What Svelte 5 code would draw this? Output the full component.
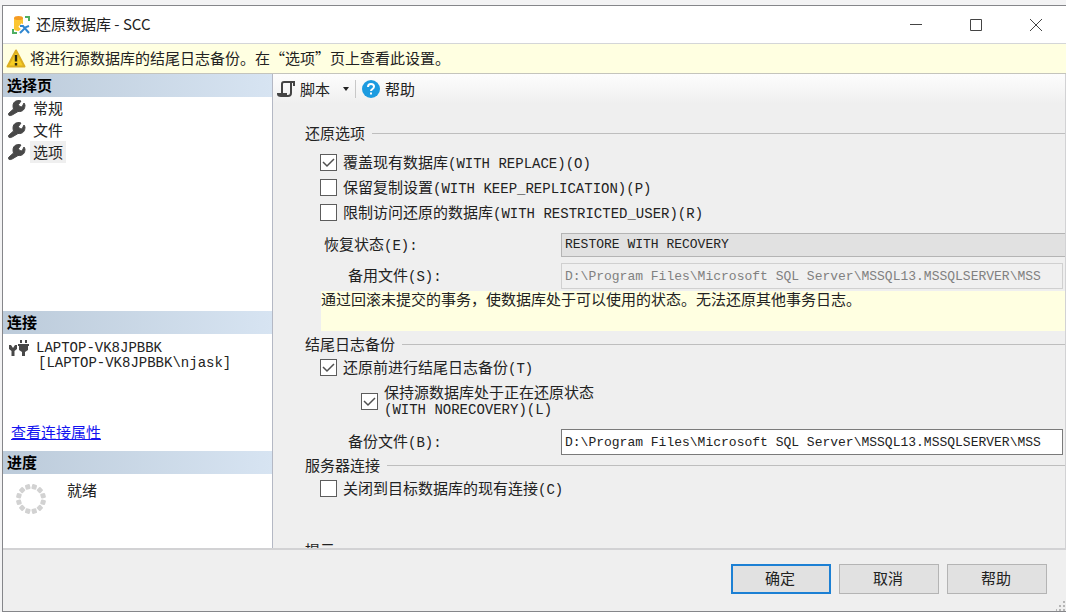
<script>
  const path = 'D:\\Program Files\\Microsoft SQL Server\\MSSQL13.MSSQLSERVER\\MSS';
  const pages = ['常规', '文件', '选项'];
  const restoreOptions = [
    { id: 'replace', zh: '覆盖现有数据库', en: '(WITH REPLACE)(O)', checked: true },
    { id: 'keep', zh: '保留复制设置', en: '(WITH KEEP_REPLICATION)(P)', checked: false },
    { id: 'restrict', zh: '限制访问还原的数据库', en: '(WITH RESTRICTED_USER)(R)', checked: false }
  ];
  const ticks = Array.from({ length: 12 }, (_, i) => i * 30 + 15);
  let selected = $state('选项');
</script>

<div class="desktop">
  <div class="dialog">
    <header class="titlebar">
      <svg class="app-icon" width="20" height="20" viewBox="0 0 20 20">
        <path d="M3 3v11c0 2.500 9 2.500 9 0V3z" fill="#fcc632" />
        <ellipse cx="7.500" cy="3" rx="4.500" ry="2" fill="#f59b23" />
        <path d="M14 2h4v4M2 14v4h4" fill="none" stroke="#4fae62" stroke-width="2" />
        <path d="M9 10l9 8M18 10l-9 8" stroke="#fff" stroke-width="5" />
        <path d="M9 11l3 0 6 7M18 11l-3 1-6 6" fill="none" stroke="#2f86d0" stroke-width="2" />
      </svg>
      <h1>还原数据库 - SCC</h1>
      <div class="caption">
        <button aria-label="最小化"><svg width="14" height="14"><path d="M1 6.500h12" /></svg></button>
        <button aria-label="最大化"><svg width="14" height="14"><path d="M1.500 1.500h11v11h-11z" /></svg></button>
        <button aria-label="关闭"><svg width="14" height="14"><path d="M1 1l12 12M13 1L1 13" /></svg></button>
      </div>
    </header>

    <div class="banner">
      <svg width="20" height="20" viewBox="0 0 20 20">
        <path d="M10 1.500L18.500 17.500h-17z" fill="#f6cd22" stroke="#dcae20" stroke-width="2" stroke-linejoin="round" />
        <path d="M10 6v6.500M10 14v2.500" stroke="#2b2b10" stroke-width="2.400" />
      </svg>
      <span>将进行源数据库的结尾日志备份。在“选项”页上查看此设置。</span>
    </div>

    <div class="body">
      <aside>
        <section class="pages">
          <h2>选择页</h2>
          <nav>
            {#each pages as page}
              <button class="page" class:selected={selected === page} onclick={() => (selected = page)}>
                <svg width="18" height="18" viewBox="0 0 18 18">
                  <path d="M0.500 14.500l5-4.500C4 5 6 1.500 11 1.500l2 .5-2.500 3.500 1 2 2.500.5 2-4 1 2c0 4-2 7-7 6.500L5 15.500c-2.500 2-5.500 1-4.500-1z" fill="#484848" stroke="#484848" />
                </svg>
                <span>{page}</span>
              </button>
            {/each}
          </nav>
        </section>
        <section class="connection">
          <h2>连接</h2>
          <div class="server">
            <svg width="20" height="18" viewBox="0 0 20 18" fill="#484848">
              <path d="M0 6h2l2 3 2-3h2v4l-2.500 2v5h-3v-5L0 10zM9 5h11v2h-1v4l-3 2v4h-3v-4l-3-2V7H9zM11 1h2v3h-2zM16 1h2v3h-2z" />
            </svg>
            <p class="latin">LAPTOP-VK8JPBBK<br /><span>[LAPTOP-VK8JPBBK\njask]</span></p>
          </div>
          <a href="#properties">查看连接属性</a>
        </section>
        <section class="progress">
          <h2>进度</h2>
          <div class="status">
            <svg width="32" height="32" viewBox="-16 -16 32 32">
              {#each ticks as angle}
                <rect x="-2.500" y="-15" width="5" height="5" rx="1" fill="#d2d2d2" transform="rotate({angle})" />
              {/each}
            </svg>
            <span>就绪</span>
          </div>
        </section>
      </aside>

      <main>
        <div class="toolbar">
          <button>
            <svg width="18" height="18" viewBox="0 0 18 18" fill="none" stroke="#444" stroke-width="2">
              <path d="M5 13V4q0-2 2-2h10v4M14 2v11q0 3-3 3H4q-3 0-3-2h9" />
            </svg>
            脚本
            <i class="arrow"></i>
          </button>
          <span class="divider"></span>
          <button>
            <svg width="18" height="18" viewBox="0 0 18 18">
              <circle cx="9" cy="9" r="9" fill="#1c9be0" />
              <path d="M6 7q0-3 3-3t3 2.500q0 1.500-1.500 2.500T9 11M9 12.500v2" fill="none" stroke="#fff" stroke-width="2" />
            </svg>
            帮助
          </button>
        </div>

        <div class="form">
          <h3>还原选项</h3>
          {#each restoreOptions as option}
            <label class="check">
              <input type="checkbox" checked={option.checked} />
              <span>{option.zh}<span class="latin">{option.en}</span></span>
            </label>
          {/each}
          <div class="field state">
            <label for="state">恢复状态<span class="latin">(E):</span></label>
            <select id="state"><option>RESTORE WITH RECOVERY</option></select>
          </div>
          <div class="field standby">
            <label class="inner" for="standby">备用文件<span class="latin">(S):</span></label>
            <input id="standby" type="text" value={path} disabled />
          </div>
          <p class="hint">通过回滚未提交的事务，使数据库处于可以使用的状态。无法还原其他事务日志。</p>

          <h3 class="tail">结尾日志备份</h3>
          <label class="check">
            <input type="checkbox" checked />
            <span>还原前进行结尾日志备份<span class="latin">(T)</span></span>
          </label>
          <label class="check nested">
            <input type="checkbox" checked />
            <span>保持源数据库处于正在还原状态<br /><span class="latin">(WITH NORECOVERY)(L)</span></span>
          </label>
          <div class="field backup">
            <label class="inner" for="backup">备份文件<span class="latin">(B):</span></label>
            <input id="backup" type="text" value={path} />
          </div>

          <h3>服务器连接</h3>
          <label class="check">
            <input type="checkbox" />
            <span>关闭到目标数据库的现有连接<span class="latin">(C)</span></span>
          </label>
          <h3 class="prompt">提示</h3>
        </div>
      </main>
    </div>

    <footer>
      <button class="primary">确定</button>
      <button>取消</button>
      <button>帮助</button>
      <svg class="grip" width="10" height="10" fill="#b5b5b5">
        <path d="M7 0h2v2H7zM7 4h2v2H7zM3 4h2v2H3zM7 8h2v2H7zM3 8h2v2H3zM0 8h1v2H0z" />
      </svg>
    </footer>
  </div>
</div>

<style>
  :global(body) {
    margin: 0;
  }
  .desktop {
    box-sizing: border-box;
    height: 100vh;
    padding: 5px 0 0 2px;
    background: #f3f3f4;
    color: #222;
    font: 15px/20px 'Noto Sans CJK SC', sans-serif;
  }
  .desktop * {
    box-sizing: border-box;
  }
  button,
  input,
  select {
    margin: 0;
    border-radius: 0;
    color: inherit;
    font: inherit;
  }
  h1,
  h2,
  h3,
  p {
    margin: 0;
    font-size: 15px;
    font-weight: 400;
  }
  svg {
    flex: none;
  }
  .latin {
    font-family: 'Liberation Mono', monospace;
    font-size: 14px;
  }
  .dialog {
    display: flex;
    flex-direction: column;
    height: 100%;
    border: 1px solid #85868a;
    border-right: 0;
    background: #efefef;
  }
  .titlebar {
    display: flex;
    flex: none;
    align-items: center;
    gap: 5px;
    height: 37px;
    padding-left: 8px;
    background: #fff;
  }
  .titlebar h1 {
    flex: 1;
    padding-bottom: 2px;
  }
  .caption {
    display: flex;
  }
  .caption button {
    display: grid;
    place-items: center;
    width: 60px;
    height: 36px;
    padding: 0;
    border: 0;
    background: none;
  }
  .caption path {
    fill: none;
    stroke: #444;
  }
  .banner {
    display: flex;
    flex: none;
    align-items: center;
    gap: 4px;
    height: 31px;
    padding-left: 3px;
    border-top: 1px solid #d4d6d8;
    border-bottom: 1px solid #c4c4bc;
    background: #ffffe1;
  }
  .banner span {
    padding-bottom: 2px;
  }
  .body {
    display: flex;
    flex: 1;
    min-height: 0;
    border-bottom: 2px solid #d2d2d4;
  }
  aside {
    display: flex;
    flex: none;
    flex-direction: column;
    width: 270px;
    border-right: 1px solid #b4b8c4;
    background: #fff;
  }
  h2 {
    height: 23px;
    padding-left: 4px;
    background: linear-gradient(90deg, #bccbda, #d7e4f2);
    color: #000;
    font-weight: 700;
    line-height: 21px;
  }
  .pages {
    flex: 1;
  }
  .connection {
    height: 140px;
  }
  .progress {
    height: 97px;
  }
  .page {
    display: flex;
    align-items: center;
    gap: 4px;
    height: 22px;
    padding: 0 0 0 5px;
    border: 0;
    background: none;
  }
  .page span {
    padding: 0 3px;
    line-height: 22px;
  }
  .page.selected span {
    background: #efefef;
  }
  .server {
    display: flex;
    gap: 7px;
    padding: 5px 0 0 6px;
  }
  .server p {
    line-height: 15px;
    padding-top: 2px;
  }
  .server p span {
    padding-left: 2px;
  }
  .connection a {
    display: inline-block;
    margin: 51px 0 0 8px;
    color: #1414f0;
  }
  .status {
    display: flex;
    gap: 20px;
    padding: 6px 0 0 12px;
  }
  .status svg {
    margin-top: 3px;
  }
  main {
    flex: 1;
    min-width: 0;
    overflow: hidden;
    border-right: 1px solid #d2d2d4;
  }
  .toolbar {
    display: flex;
    align-items: center;
    height: 30px;
    padding-left: 4px;
    background: linear-gradient(#fdfdfd, #efefef);
  }
  .toolbar button {
    display: flex;
    align-items: center;
    gap: 5px;
    padding: 0;
    border: 0;
    background: none;
  }
  .arrow {
    margin: 0 6px 0 8px;
    border: 3px solid transparent;
    border-top: 4px solid #222;
    border-bottom: 0;
  }
  .divider {
    width: 1px;
    height: 18px;
    margin-right: 6px;
    background: #c8c8c8;
  }
  .form {
    display: flex;
    flex-direction: column;
    padding: 19px 0 0 32px;
  }
  h3 {
    display: flex;
    align-items: center;
    gap: 7px;
    height: 20px;
  }
  h3::after {
    flex: 1;
    height: 1px;
    background: #bebebe;
    content: '';
  }
  h3 + .check {
    margin-top: 1px;
  }
  h3:first-child + .check {
    margin-top: 7px;
  }
  .check {
    display: flex;
    align-items: center;
    gap: 6px;
    height: 25px;
    padding-left: 15px;
  }
  .check input {
    flex: none;
    width: 17px;
    height: 17px;
    border: 1px solid #5c5c5c;
    background: #fff;
    appearance: none;
  }
  .check input:checked {
    background: #fff
      url("data:image/svg+xml,%3Csvg xmlns='http://www.w3.org/2000/svg' viewBox='0 0 15 15'%3E%3Cpath d='M2 7l4 4 7-7' fill='none' stroke='%23505050' stroke-width='1.500'/%3E%3C/svg%3E");
  }
  .nested {
    height: 32px;
    margin-top: 5px;
    padding-left: 56px;
    line-height: 16px;
  }
  .field {
    display: flex;
    align-items: center;
    height: 26px;
  }
  .field label {
    flex: none;
    width: 256px;
    padding-left: 19px;
  }
  .field .inner {
    padding-left: 43px;
  }
  .field input,
  .field select {
    flex: 1;
    min-width: 0;
    height: 26px;
    padding: 0 3px;
    border: 1px solid #7a7a7a;
    background: #fff;
    font: 13px/20px 'Liberation Mono', monospace;
    appearance: none;
  }
  .field input {
    margin-right: 2px;
  }
  .field input:disabled {
    border-color: #d0d0d0;
    background: #f0f0f0;
    color: #808080;
  }
  .field select {
    height: 24px;
    margin-right: -20px;
    border-color: #b4b4b4;
    background: #e1e1e1;
  }
  .state {
    height: 24px;
    margin-top: 8px;
  }
  .standby {
    margin-top: 6px;
  }
  .backup {
    margin-top: 12px;
  }
  .hint {
    height: 40px;
    margin: 2px 0 0 16px;
    background: #ffffe1;
    line-height: 15px;
  }
  .tail {
    margin-top: 3px;
  }
  .prompt {
    margin-top: 39px;
  }
  footer {
    position: relative;
    display: flex;
    flex: none;
    align-items: center;
    justify-content: flex-end;
    gap: 8px;
    height: 61px;
    padding: 0 19px 3px 0;
  }
  footer button {
    width: 100px;
    height: 30px;
    padding: 0 2px 2px 0;
    border: 1px solid #b4b4b4;
    background: #e1e1e1;
  }
  footer .primary {
    border: 2px solid #1c80d4;
  }
  .grip {
    position: absolute;
    right: 0;
    bottom: 0;
  }
</style>
